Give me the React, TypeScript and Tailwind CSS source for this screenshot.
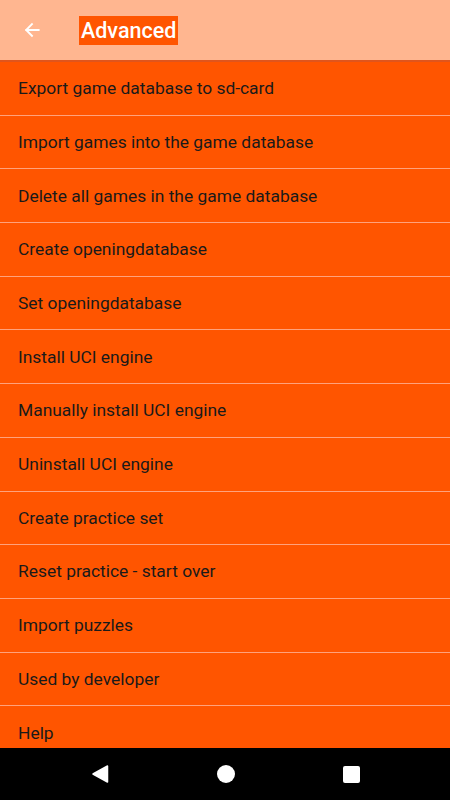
const items = [
  "Export game database to sd-card",
  "Import games into the game database",
  "Delete all games in the game database",
  "Create openingdatabase",
  "Set openingdatabase",
  "Install UCI engine",
  "Manually install UCI engine",
  "Uninstall UCI engine",
  "Create practice set",
  "Reset practice - start over",
  "Import puzzles",
  "Used by developer",
  "Help",
];

export default function App() {
  return (
    <div className="flex h-[800px] w-[450px] flex-col overflow-hidden bg-[#ff5500] font-['Roboto',sans-serif]">
      {/* Toolbar */}
      <header className="relative z-10 flex h-[62px] shrink-0 items-center border-b-2 border-[#e0551c] bg-[#ffb690]">
        <button className="ml-[20px] flex h-6 w-6 items-center justify-center text-white">
          <svg width="20" height="20" viewBox="0 0 24 24" fill="none">
            <path d="M20 12H5M12 5l-7 7 7 7" stroke="currentColor" strokeWidth="2.2" strokeLinecap="square" />
          </svg>
        </button>
        <h1 className="ml-[35px] bg-[#ff5500] px-[2px] text-[21.5px] font-medium leading-[29px] text-white">
          Advanced
        </h1>
      </header>

      {/* Menu list */}
      <ul className="flex-1 overflow-hidden">
        {items.map((item) => (
          <li
            key={item}
            className="flex h-[53.7px] items-center border-b border-[#ffa27c] pl-[18px] text-[17.4px] text-[#1a1a1a]"
          >
            {item}
          </li>
        ))}
      </ul>

      {/* Android navigation bar */}
      <nav className="flex h-[52px] shrink-0 items-center justify-center gap-[108px] bg-black">
        <svg width="18" height="20" viewBox="0 0 18 20">
          <path d="M16.5 2v16L2 10z" fill="white" stroke="white" strokeLinejoin="round" strokeWidth="1.5" />
        </svg>
        <div className="h-[18px] w-[18px] rounded-full bg-white" />
        <div className="h-[17px] w-[17px] rounded-[2px] bg-white" />
      </nav>
    </div>
  );
}
